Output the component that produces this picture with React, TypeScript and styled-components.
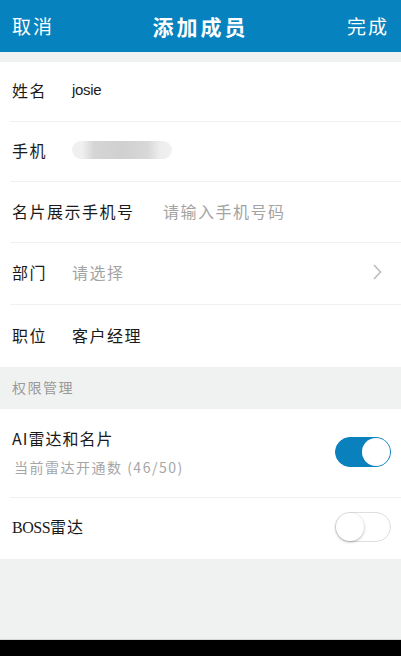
import React, { FunctionComponent } from "react";
import styled, { createGlobalStyle } from "styled-components";

const GlobalStyle = createGlobalStyle`
  html, body {
    margin: 0;
    padding: 0;
    background-color: #f0f2f1;
  }
  #root {
    height: 656px;
  }
`;

const Page = styled.div`
  display: flex;
  flex-direction: column;
  height: 656px;
  background-color: #f0f2f1;
  font-family: "Noto Sans CJK SC", "Noto Sans", sans-serif;
  color: #1c1c1c;
`;

const TopBar = styled.div`
  display: flex;
  flex-direction: row;
  align-items: center;
  justify-content: space-between;
  height: 52px;
  padding: 0 12px;
  background-color: #0683be;
  color: #ffffff;
`;

const BarAction = styled.div`
  font-size: 19px;
  letter-spacing: 2px;
  line-height: 26px;
`;

const BarTitle = styled.div`
  font-size: 21px;
  font-weight: 700;
  letter-spacing: 3px;
  line-height: 28px;
`;

const Group = styled.div<{ $top: number }>`
  display: flex;
  flex-direction: column;
  padding-left: 10px;
  background-color: #ffffff;
  margin-top: ${(p) => p.$top}px;
`;

const Row = styled.div<{ $height: number; $last?: boolean }>`
  display: flex;
  flex-direction: row;
  align-items: center;
  box-sizing: border-box;
  height: ${(p) => p.$height}px;
  padding: 0 10px 3px 2px;
  border-bottom: ${(p) => (p.$last ? "none" : "1px solid #eff0f0")};
`;

const Label = styled.div<{ $width: number }>`
  width: ${(p) => p.$width}px;
  flex-shrink: 0;
  font-size: 16px;
  letter-spacing: 1.5px;
  line-height: 22px;
  color: #1a1a1a;
`;

const Value = styled.div<{ $muted?: boolean }>`
  flex: 1;
  font-size: 16px;
  letter-spacing: 1.5px;
  line-height: 22px;
  color: ${(p) => (p.$muted ? "#a3a3a3" : "#1a1a1a")};
`;

const NameValue = styled(Value)`
  font-family: "Liberation Sans", "Noto Sans", sans-serif;
  font-size: 15px;
  letter-spacing: -0.3px;
`;

const BlurredPhone = styled.div`
  width: 100px;
  height: 18px;
  border-radius: 9px;
  background: linear-gradient(
    90deg,
    #f0f0f0 0%,
    #f0f0f0 10%,
    #d5d5d5 22%,
    #d0d0d0 50%,
    #d8d8d8 76%,
    #ededed 88%,
    #f0f0f0 100%
  );
`;

const Chevron = styled.svg`
  width: 12px;
  height: 18px;
  flex-shrink: 0;
  margin-right: 8px;
`;

const SectionHeader = styled.div`
  display: flex;
  align-items: center;
  height: 40px;
  padding: 0 12px 2px 12px;
  font-size: 14px;
  letter-spacing: 1.5px;
  color: #9a9a9a;
`;

const TextStack = styled.div`
  flex: 1;
  display: flex;
  flex-direction: column;
  gap: 8px;
`;

const Title = styled.div`
  font-size: 16px;
  letter-spacing: 1px;
  line-height: 22px;
  color: #1a1a1a;
`;

const Latin = styled.span`
  font-family: "Liberation Serif", serif;
  font-size: 16px;
  letter-spacing: -0.5px;
`;

const SubTitle = styled.div`
  font-size: 14px;
  letter-spacing: 1.5px;
  line-height: 20px;
  padding-left: 2px;
  color: #a6a6a6;
`;

const Toggle = styled.div<{ $on: boolean }>`
  position: relative;
  width: 56px;
  height: 30px;
  flex-shrink: 0;
  border-radius: 16px;
  box-sizing: border-box;
  background-color: ${(p) => (p.$on ? "#0a80bd" : "#ffffff")};
  border: 1px solid ${(p) => (p.$on ? "#0a80bd" : "#dedede")};
`;

const Knob = styled.div<{ $on: boolean }>`
  position: absolute;
  top: 0;
  left: ${(p) => (p.$on ? "26px" : "0")};
  width: 28px;
  height: 28px;
  border-radius: 50%;
  background-color: #ffffff;
  box-shadow: ${(p) => (p.$on ? "none" : "0 1px 3px rgba(0, 0, 0, 0.3)")};
`;

const Spacer = styled.div`
  flex: 1;
`;

const NavBar = styled.div`
  height: 16px;
  background-color: #000000;
  border-top: 1px solid #d6d6d6;
`;

type SwitchProps = { on: boolean };

const Switch: FunctionComponent<SwitchProps> = ({ on }) => (
  <Toggle $on={on}>
    <Knob $on={on} />
  </Toggle>
);

const App: FunctionComponent = () => {
  return (
    <>
      <GlobalStyle />
      <Page>
        <TopBar>
          <BarAction>取消</BarAction>
          <BarTitle>添加成员</BarTitle>
          <BarAction>完成</BarAction>
        </TopBar>
        <Group $top={10}>
          <Row $height={60}>
            <Label $width={60}>姓名</Label>
            <NameValue>josie</NameValue>
          </Row>
          <Row $height={60}>
            <Label $width={60}>手机</Label>
            <BlurredPhone />
          </Row>
          <Row $height={61}>
            <Label $width={151}>名片展示手机号</Label>
            <Value $muted>请输入手机号码</Value>
          </Row>
          <Row $height={62}>
            <Label $width={60}>部门</Label>
            <Value $muted>请选择</Value>
            <Chevron viewBox="0 0 12 18">
              <path
                d="M3 2 L9.5 9 L3 16"
                fill="none"
                stroke="#bdbdbd"
                strokeWidth="1.6"
              />
            </Chevron>
          </Row>
          <Row $height={62} $last>
            <Label $width={60}>职位</Label>
            <Value>客户经理</Value>
          </Row>
        </Group>
        <SectionHeader>权限管理</SectionHeader>
        <Group $top={0}>
          <Row $height={89}>
            <TextStack>
              <Title>AI雷达和名片</Title>
              <SubTitle>当前雷达开通数 (46/50)</SubTitle>
            </TextStack>
            <Switch on />
          </Row>
          <Row $height={61} $last>
            <Title>
              <Latin>BOSS</Latin>雷达
            </Title>
            <Spacer />
            <Switch on={false} />
          </Row>
        </Group>
        <Spacer />
        <NavBar />
      </Page>
    </>
  );
};

export default App;
